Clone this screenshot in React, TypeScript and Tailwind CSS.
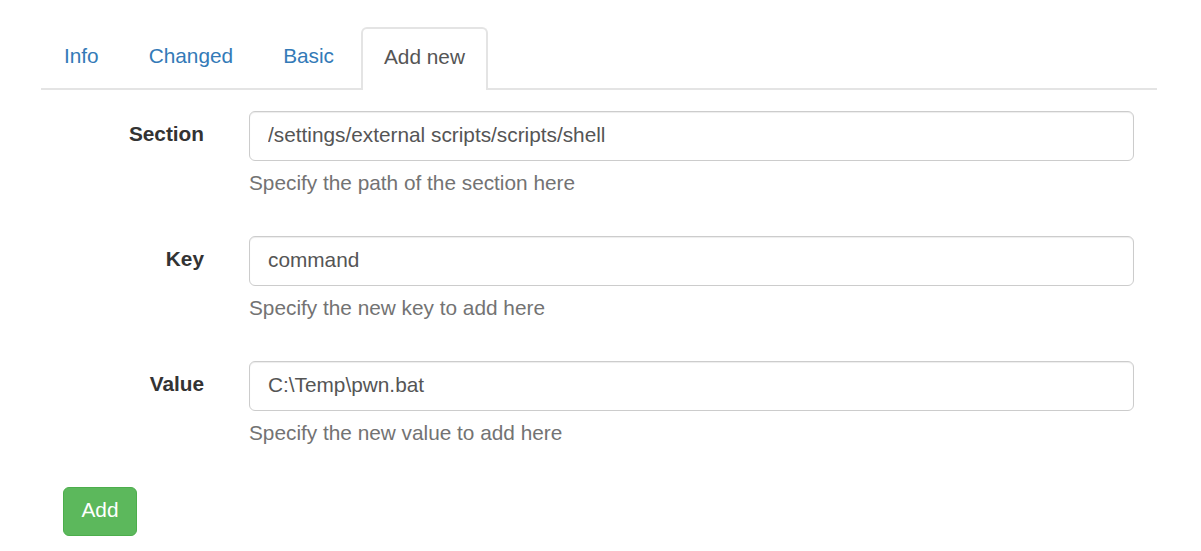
import { useState } from "react";

const tabs = ["Info", "Changed", "Basic", "Add new"];

const fields = [
  {
    label: "Section",
    value: "/settings/external scripts/scripts/shell",
    help: "Specify the path of the section here",
  },
  { label: "Key", value: "command", help: "Specify the new key to add here" },
  {
    label: "Value",
    value: "C:\\Temp\\pwn.bat",
    help: "Specify the new value to add here",
  },
];

export default function App() {
  const [active, setActive] = useState("Add new");

  return (
    <div className="min-h-screen bg-white font-['Liberation_Sans',Arial,sans-serif] text-[20.8px] text-[#333]">
      <div className="ml-[41px] w-[1116px] pt-[27px]">
        {/* tabs */}
        <ul className="flex border-b-2 border-[#e4e4e4]">
          {tabs.map((t) => {
            const on = t === active;
            return (
              <li key={t} className="-mb-[2px] mr-[4px]">
                <button
                  onClick={() => setActive(t)}
                  className={
                    on
                      ? "h-[63px] rounded-t-[6px] border-2 border-b-0 border-[#e4e4e4] bg-white px-[21px] pb-[6px] leading-[29px] text-[#555]"
                      : "h-[63px] rounded-t-[6px] border-2 border-transparent px-[21px] pb-[6px] leading-[29px] text-[#337ab7]"
                  }
                >
                  {t}
                </button>
              </li>
            );
          })}
        </ul>

        {/* form */}
        <form className="pt-[21px]" onSubmit={(e) => e.preventDefault()}>
          {fields.map((f) => (
            <div key={f.label} className="mb-[29px] flex">
              <label className="w-[163px] text-right font-bold leading-[46px]">
                {f.label}
              </label>
              <div className="ml-[45px] w-[885px]">
                <input
                  defaultValue={f.value}
                  className="h-[50px] w-full rounded-[6px] border border-[#ccc] px-[18px] pb-[3px] text-[20.8px] text-[#555] shadow-[inset_0_1px_1px_rgba(0,0,0,0.075)] outline-none"
                />
                <p className="mt-[7px] mb-[10px] leading-[29px] text-[#737373]">
                  {f.help}
                </p>
              </div>
            </div>
          ))}
          <button
            type="submit"
            className="ml-[22px] mt-[1px] h-[49px] w-[74px] rounded-[6px] border border-[#4cae4c] bg-[#5cb85c] pb-[4px] text-white"
          >
            Add
          </button>
        </form>
      </div>
    </div>
  );
}
